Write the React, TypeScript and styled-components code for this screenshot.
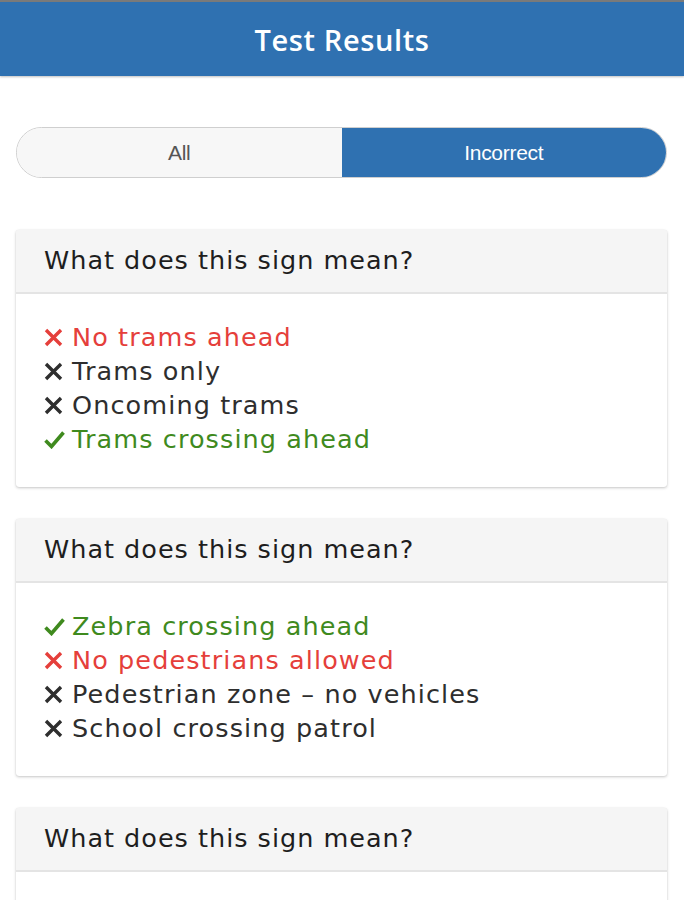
import React from "react";
import styled, { createGlobalStyle } from "styled-components";

const Global = createGlobalStyle`
  html, body { margin: 0; padding: 0; background: #ffffff; }
  body { font-family: "DejaVu Sans", "Open Sans", sans-serif; }
  * { box-sizing: border-box; }
`;

const Page = styled.div`
  width: 684px;
  height: 900px;
  overflow: hidden;
  background: #ffffff;
  border-top: 2px solid #7a7a7a;
`;

const Header = styled.header`
  height: 74px;
  background: #2f71b1;
  display: flex;
  align-items: center;
  justify-content: center;
  box-shadow: 0 1px 2px rgba(0, 0, 0, 0.25);
`;

const Title = styled.h1`
  margin: 0;
  color: #ffffff;
  font-family: "Open Sans", sans-serif;
  font-weight: 600;
  font-size: 29px;
  letter-spacing: 0.6px;
`;

const Content = styled.main`
  padding: 51px 17px 0 16px;
  display: flex;
  flex-direction: column;
`;

const Segmented = styled.div`
  display: grid;
  grid-template-columns: 1fr 1fr;
  height: 51px;
  border-radius: 26px;
  overflow: hidden;
  border: 1px solid #cfcfcf;
  margin-bottom: 52px;
`;

const Segment = styled.div<{ $active?: boolean }>`
  display: flex;
  align-items: center;
  justify-content: center;
  background: ${(p) => (p.$active ? "#2f71b1" : "#f7f7f7")};
  color: ${(p) => (p.$active ? "#ffffff" : "#555555")};
  font-family: "Liberation Sans", Arial, sans-serif;
  font-size: 21px;
  letter-spacing: -0.3px;
`;

const Cards = styled.div`
  display: flex;
  flex-direction: column;
  gap: 32px;
`;

const Card = styled.section`
  background: #ffffff;
  border-radius: 3px;
  box-shadow: 0 1px 3px rgba(0, 0, 0, 0.22), 0 0 1px rgba(0, 0, 0, 0.12);
  overflow: hidden;
`;

const CardHeader = styled.div`
  height: 64px;
  background: #f5f5f5;
  border-bottom: 2px solid #e4e4e4;
  display: flex;
  align-items: center;
  padding-left: 28px;
  padding-bottom: 3px;
  font-family: "DejaVu Sans", sans-serif;
  font-size: 25.5px;
  color: #1e1e1e;
  letter-spacing: 1px;
`;

const Answers = styled.ul`
  list-style: none;
  margin: 0;
  padding: 26px 0 31px 28px;
  min-height: 193px;
  display: flex;
  flex-direction: column;
`;

type Kind = "wrong" | "right" | "other";

const colors: Record<Kind, string> = {
  wrong: "#e53f3b",
  right: "#3f8a1e",
  other: "#2e2e2e",
};

const Answer = styled.li<{ $kind: Kind }>`
  height: 34px;
  display: flex;
  align-items: center;
  gap: 6px;
  font-family: "DejaVu Sans", sans-serif;
  font-size: 25.5px;
  letter-spacing: 1.1px;
  color: ${(p) => colors[p.$kind]};
`;

const IconBox = styled.span`
  width: 22px;
  display: inline-flex;
  align-items: center;
  justify-content: flex-start;
`;

const Cross = ({ color }: { color: string }) => (
  <svg width="19" height="19" viewBox="0 0 19 19">
    <path d="M2 2 L17 17 M17 2 L2 17" stroke={color} strokeWidth="3.4" strokeLinecap="butt" />
  </svg>
);

const Check = ({ color }: { color: string }) => (
  <svg width="21" height="19" viewBox="0 0 21 19">
    <path d="M1.5 10.5 L7.5 16.5 L19.5 2.5" stroke={color} strokeWidth="3.6" fill="none" strokeLinejoin="miter" />
  </svg>
);

type Q = { answers: { text: string; kind: Kind }[] };

const questions: Q[] = [
  {
    answers: [
      { text: "No trams ahead", kind: "wrong" },
      { text: "Trams only", kind: "other" },
      { text: "Oncoming trams", kind: "other" },
      { text: "Trams crossing ahead", kind: "right" },
    ],
  },
  {
    answers: [
      { text: "Zebra crossing ahead", kind: "right" },
      { text: "No pedestrians allowed", kind: "wrong" },
      { text: "Pedestrian zone – no vehicles", kind: "other" },
      { text: "School crossing patrol", kind: "other" },
    ],
  },
  { answers: [] },
];

export default function App() {
  return (
    <Page>
      <Global />
      <Header>
        <Title>Test Results</Title>
      </Header>
      <Content>
        <Segmented>
          <Segment>All</Segment>
          <Segment $active>Incorrect</Segment>
        </Segmented>
        <Cards>
          {questions.map((q, i) => (
            <Card key={i}>
              <CardHeader>What does this sign mean?</CardHeader>
              <Answers>
                {q.answers.map((a) => (
                  <Answer key={a.text} $kind={a.kind}>
                    <IconBox>
                      {a.kind === "right" ? (
                        <Check color={colors[a.kind]} />
                      ) : (
                        <Cross color={colors[a.kind]} />
                      )}
                    </IconBox>
                    {a.text}
                  </Answer>
                ))}
              </Answers>
            </Card>
          ))}
        </Cards>
      </Content>
    </Page>
  );
}
